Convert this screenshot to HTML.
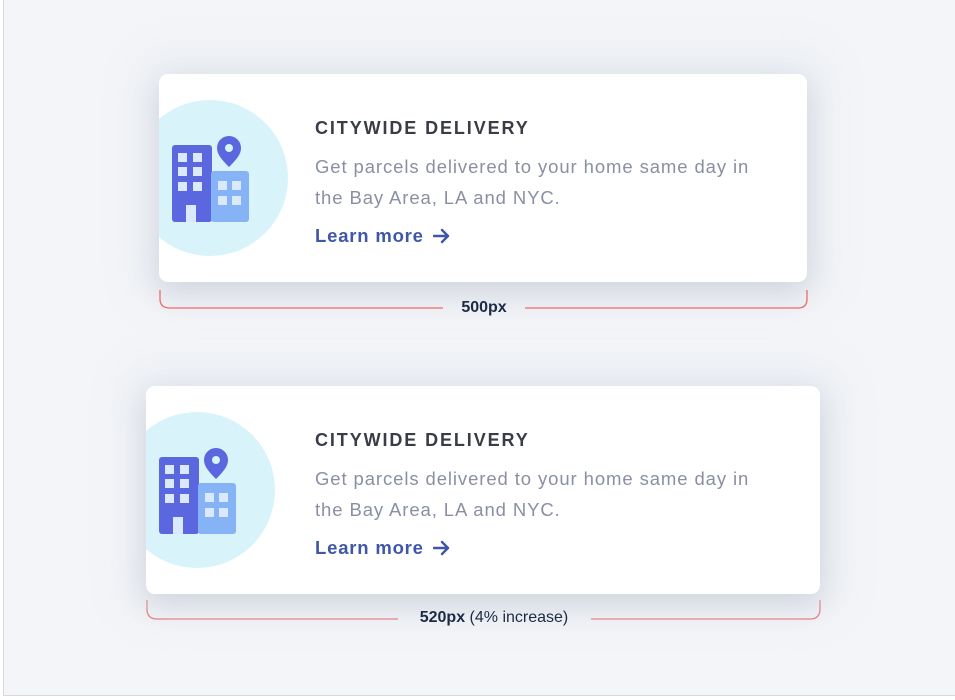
<!DOCTYPE html>
<html><head><meta charset="utf-8"><style>
body{margin:0;width:955px;height:700px;background:#fff;font-family:"Liberation Sans",sans-serif;overflow:hidden}
.page{position:absolute;left:3px;top:0;width:952px;height:696px;background:#f4f5f8;border-left:1px solid #d8dadf;border-bottom:1px solid #d8dadf;box-sizing:border-box}
.card{position:absolute;background:#fff;border-radius:9px;box-shadow:0 10px 30px rgba(40,50,80,.13),0 0 40px 20px rgba(225,232,238,.6);overflow:hidden;height:208px}
.circ{position:absolute;left:-27px;top:26px;width:156px;height:156px;border-radius:50%;background:#d8f3fa}
.ic{position:absolute;left:10px;top:36px}
.t{position:absolute;left:156px;top:44px;font-size:18px;font-weight:bold;letter-spacing:1.9px;color:#3a3d48}
.d{position:absolute;left:156px;top:77px;font-size:18.5px;line-height:31px;letter-spacing:.9px;color:#8a8fa3;width:445px}
.l{position:absolute;left:156px;top:151px;font-size:18.5px;font-weight:bold;letter-spacing:.8px;color:#4057a8}
.l svg{vertical-align:-2px;margin-left:9px}
.lab{position:absolute;font-size:16px;color:#1c2a44;transform:translateX(-50%);white-space:nowrap}
</style></head><body>
<div class="page"></div>
<svg width="0" height="0" style="position:absolute"><defs><g id="b">
<rect x="3" y="35" width="40" height="77" rx="3" fill="#5b67de"/>
<rect x="42" y="61" width="38" height="51" rx="3" fill="#86b2f6"/>
<g fill="#dbe9ff"><rect x="9" y="43" width="9" height="9"/><rect x="24" y="43" width="9" height="9"/><rect x="9" y="57" width="9" height="9"/><rect x="24" y="57" width="9" height="9"/><rect x="9" y="72" width="9" height="9"/><rect x="24" y="72" width="9" height="9"/>
<rect x="17" y="95" width="10" height="17"/>
<rect x="49" y="71" width="9" height="9"/><rect x="63" y="71" width="9" height="9"/><rect x="49" y="86" width="9" height="9"/><rect x="63" y="86" width="9" height="9"/></g>
<path d="M60 57 C52 49 48 44 48 38 A12 12 0 0 1 72 38 C72 44 68 49 60 57Z" fill="#5b67de"/>
<circle cx="60" cy="38" r="4" fill="#d8f3fa"/>
</g>
<g id="ar"><path d="M1 8H15M9 2L15 8L9 14" fill="none" stroke="#4057a8" stroke-width="2.4" stroke-linecap="round" stroke-linejoin="round"/></g></defs></svg>
<div class="card" style="left:159px;top:74px;width:648px">
<div class="circ"></div><svg class="ic" width="90" height="115" viewBox="0 0 90 115"><use href="#b"/></svg>
<div class="t">CITYWIDE DELIVERY</div>
<div class="d">Get parcels delivered to your home same day in the Bay Area, LA and NYC.</div>
<div class="l">Learn more<svg width="17" height="16" viewBox="0 0 17 16"><use href="#ar"/></svg></div></div>
<svg style="position:absolute;left:0;top:0" width="955" height="700">
<path d="M160 290V299Q160 308 170 308H443M525 308H798Q807 308 807 299V290" fill="none" stroke="#ec6a6e" stroke-width="1.3"/>
<path d="M147 600V609Q147 619 157 619H398M591 619H810Q820 619 820 609V600" fill="none" stroke="#ec6a6e" stroke-width="1.3"/>
</svg>
<div class="lab" style="left:484px;top:299px;font-weight:bold">500px</div>
<div class="card" style="left:146px;top:386px;width:674px">
<div class="circ"></div><svg class="ic" width="90" height="115" viewBox="0 0 90 115"><use href="#b"/></svg>
<div class="t" style="left:169px">CITYWIDE DELIVERY</div>
<div class="d" style="left:169px">Get parcels delivered to your home same day in the Bay Area, LA and NYC.</div>
<div class="l" style="left:169px">Learn more<svg width="17" height="16" viewBox="0 0 17 16"><use href="#ar"/></svg></div></div>
<div class="lab" style="left:494px;top:609px"><b>520px</b> (4% increase)</div>
</body></html>
